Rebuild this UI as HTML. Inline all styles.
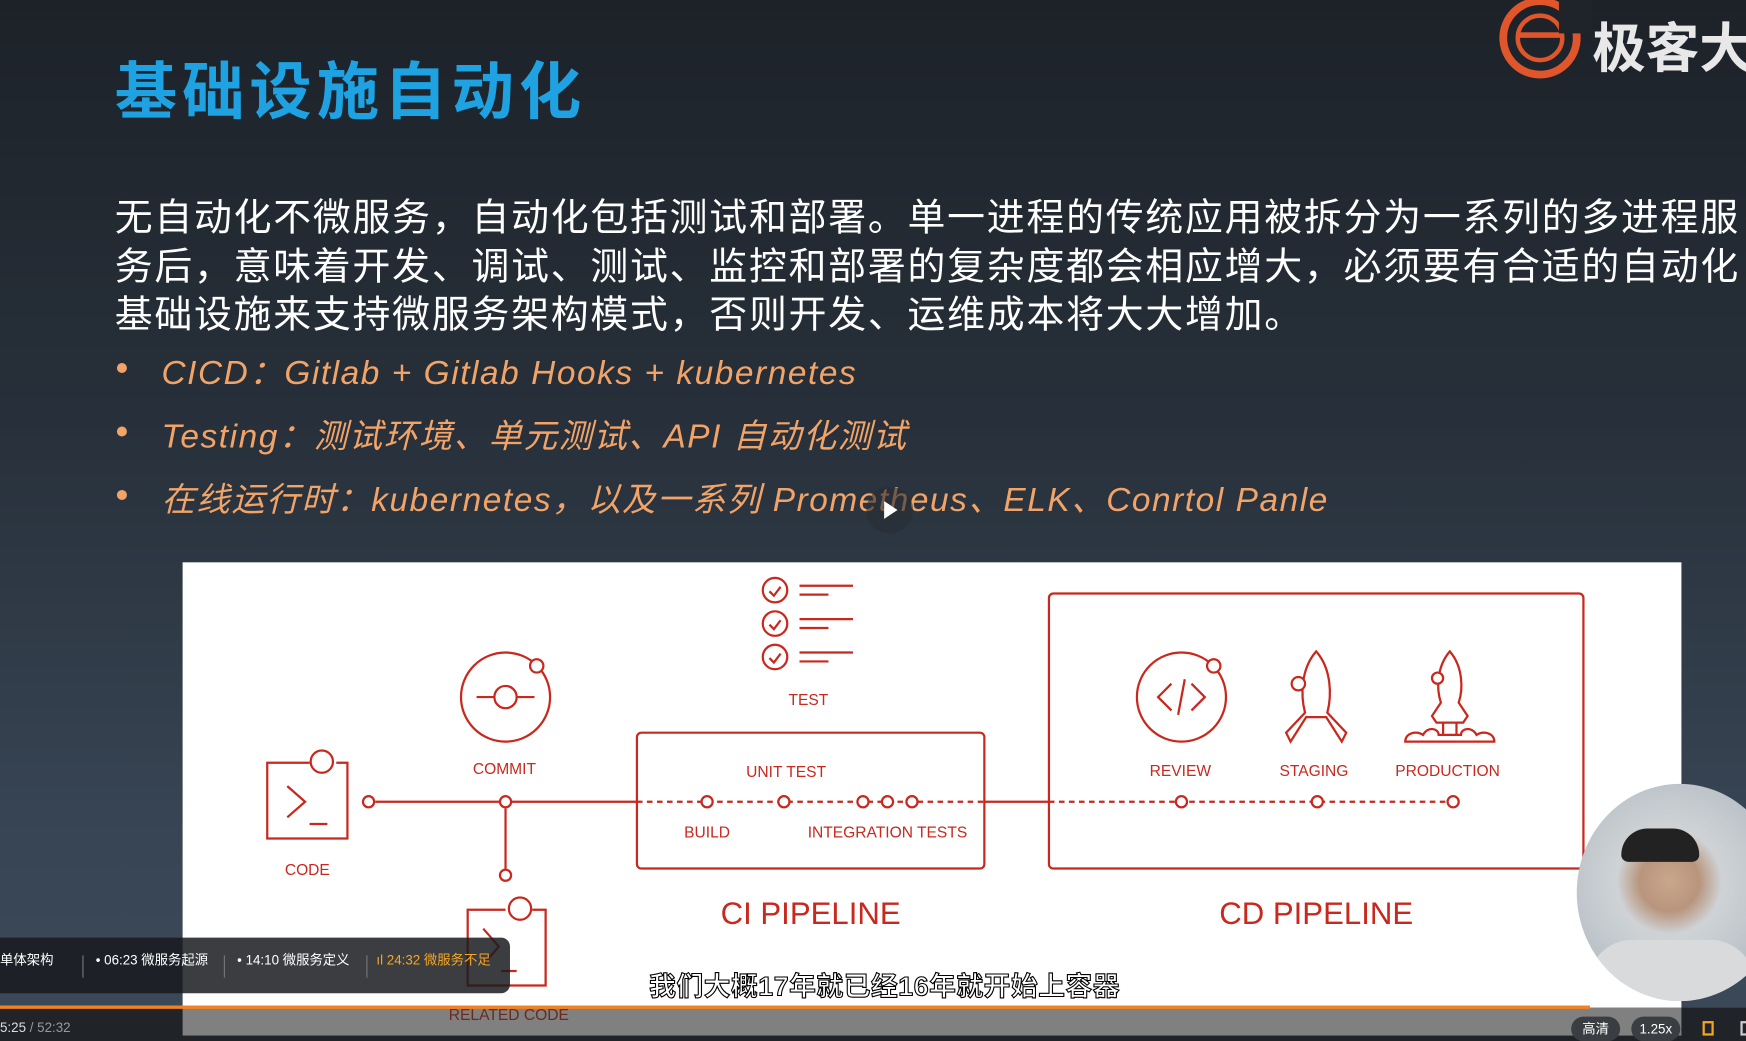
<!DOCTYPE html>
<html><head><meta charset="utf-8"><style>
html,body{margin:0;padding:0;width:1746px;height:1041px;overflow:hidden;background:#1f2429}
#w{position:absolute;left:0;top:0;width:1568px;height:935px;transform:scale(1.11352);transform-origin:0 0;background:linear-gradient(180deg,#1d2229 0%,#27303a 40%,#384554 80%,#3c4958 100%);overflow:hidden;font-family:"Liberation Sans","Noto Sans CJK SC",sans-serif}
.t{position:absolute;white-space:nowrap}
#title{left:103px;top:38px;font-size:56px;font-weight:bold;color:#1ea2e2;letter-spacing:4.5px}
.p{left:103px;font-size:34px;color:#fff;letter-spacing:1.6px}
.b{font-size:30px;color:#f2a468;font-style:italic;letter-spacing:1.4px}
.dot{position:absolute;width:9px;height:9px;border-radius:50%;background:#f2a468}
#panel{position:absolute;left:164px;top:505px;width:1346px;height:430px;background:#fff}
#bar{position:absolute;left:0;top:905px;width:1568px;height:30px;background:#202327}
</style></head><body><div id="w">
<div class="t" id="title">基础设施自动化</div>
<svg style="position:absolute;left:1340px;top:0" width="90" height="75" viewBox="0 0 90 75"><circle cx="43" cy="34" r="33" fill="none" stroke="#e0552a" stroke-width="7"/><circle cx="43" cy="34" r="20" fill="none" stroke="#e0552a" stroke-width="4"/><rect x="24" y="29" width="40" height="5" fill="#e0552a"/><rect x="60" y="0" width="30" height="30" fill="#1f242b"/></svg>
<div class="t" style="left:1430px;top:4px;font-size:48px;font-weight:bold;color:#e8e8e8">极客大</div>
<div class="t p" style="top:168px">无自动化不微服务，自动化包括测试和部署。单一进程的传统应用被拆分为一系列的多进程服</div>
<div class="t p" style="top:212px">务后，意味着开发、调试、测试、监控和部署的复杂度都会相应增大，必须要有合适的自动化</div>
<div class="t p" style="top:255px">基础设施来支持微服务架构模式，否则开发、运维成本将大大增加。</div>
<div class="dot" style="left:105px;top:326px"></div><div class="t b" style="left:145px;top:310px">CICD：Gitlab + Gitlab Hooks + kubernetes</div>
<div class="dot" style="left:105px;top:383px"></div><div class="t b" style="left:145px;top:367px">Testing：测试环境、单元测试、API 自动化测试</div>
<div class="dot" style="left:105px;top:440px"></div><div class="t b" style="left:145px;top:424px">在线运行时：kubernetes，以及一系列 Prometheus、ELK、Conrtol Panle</div>
<div id="panel"></div>
<svg style="position:absolute;left:0;top:0" width="1568" height="935" fill="none" stroke="#c8281e" stroke-width="2" font-family="Liberation Sans,sans-serif">
<rect x="572" y="658" width="312" height="122" rx="4"/>
<rect x="942" y="533" width="480" height="247" rx="4"/>
<line x1="337" y1="720" x2="572" y2="720"/><line x1="884" y1="720" x2="942" y2="720"/>
<line x1="572" y1="720" x2="884" y2="720" stroke-dasharray="5 4"/><line x1="942" y1="720" x2="1300" y2="720" stroke-dasharray="5 4"/>
<line x1="454" y1="726" x2="454" y2="780"/>
<g fill="#fff"><circle cx="331" cy="720" r="5"/><circle cx="454" cy="720" r="5"/><circle cx="454" cy="786" r="5"/><circle cx="635" cy="720" r="5"/><circle cx="704" cy="720" r="5"/><circle cx="775" cy="720" r="5"/><circle cx="797" cy="720" r="5"/><circle cx="819" cy="720" r="5"/><circle cx="1061" cy="720" r="5"/><circle cx="1183" cy="720" r="5"/><circle cx="1305" cy="720" r="5"/></g>
<path d="M278 685h-38v68h72v-68h-10M258 706l16 14-16 14M278 740h16"/><circle cx="289" cy="684" r="10"/>
<circle cx="454" cy="626" r="40"/><circle cx="482" cy="598" r="6" fill="#fff"/><circle cx="454" cy="626" r="10"/><path d="M428 626h16M464 626h16"/>
<g><circle cx="696" cy="530" r="11"/><circle cx="696" cy="560" r="11"/><circle cx="696" cy="590" r="11"/><path d="M691 531l4 4 6-8M691 561l4 4 6-8M691 591l4 4 6-8M718 526h48M718 534h26M718 556h48M718 564h26M718 586h48M718 594h26"/></g>
<circle cx="1061" cy="626" r="40"/><circle cx="1090" cy="598" r="6" fill="#fff"/><path d="M1052 614l-12 12 12 12M1070 614l12 12-12 12M1064 610l-6 32"/>
<path d="M1182 585c-14 16-14 40-10 55l-17 18 4 8 14-22h18l14 22 4-8-17-18c4-15 4-39-10-55z"/><circle cx="1166" cy="614" r="6" fill="#fff"/>
<path d="M1302 585c-12 14-12 34-8 46l-8 12 4 6h24l4-6-8-12c4-12 4-32-8-46zM1296 650v10M1308 650v10M1262 666c0-8 10-10 16-6 4-8 14-6 14 0h20c0-6 10-8 14 0 6-4 16-2 16 6z"/><circle cx="1291" cy="609" r="5" fill="#fff"/>
<g fill="#c8281e" stroke="none" font-size="14" text-anchor="middle"><text x="276" y="786">CODE</text><text x="453" y="695">COMMIT</text><text x="726" y="633">TEST</text><text x="706" y="698">UNIT TEST</text><text x="635" y="752">BUILD</text><text x="797" y="752">INTEGRATION TESTS</text><text x="1060" y="697">REVIEW</text><text x="1180" y="697">STAGING</text><text x="1300" y="697">PRODUCTION</text><text x="728" y="830" font-size="28">CI PIPELINE</text><text x="1182" y="830" font-size="28">CD PIPELINE</text></g>
<path d="M454 817h-34v68h70v-68h-12M434 834l14 16-14 16M450 872h14"/><circle cx="467" cy="816" r="10"/>
</svg>
<div id="bar"></div>
<div style="position:absolute;left:164px;top:905px;width:1346px;height:25px;background:#808080"></div>
<div class="t" style="left:403px;top:903px;font-size:14px;color:#6a2a22">RELATED CODE</div>
<div style="position:absolute;left:0;top:903px;width:1428px;height:3px;background:#f58220"></div>
<div style="position:absolute;left:0;top:842px;width:458px;height:50px;background:rgba(25,27,30,0.85);border-radius:0 8px 8px 0"></div>
<div class="t" style="left:0;top:853px;font-size:12px;color:#fff">单体架构</div>
<div style="position:absolute;left:74px;top:858px;width:1px;height:20px;background:#777"></div>
<div class="t" style="left:86px;top:853px;font-size:12px;color:#fff">• 06:23 微服务起源</div>
<div style="position:absolute;left:201px;top:858px;width:1px;height:20px;background:#777"></div>
<div class="t" style="left:213px;top:853px;font-size:12px;color:#fff">• 14:10 微服务定义</div>
<div style="position:absolute;left:329px;top:858px;width:1px;height:20px;background:#777"></div>
<div class="t" style="left:338px;top:853px;font-size:12px;color:#f5a623">ıl 24:32 微服务不足</div>
<div class="t" style="left:583px;top:866px;font-size:24px;color:#fff;-webkit-text-stroke:1px #000;font-weight:bold;letter-spacing:0.5px">我们大概17年就已经16年就开始上容器</div>
<div class="t" style="left:0;top:916px;font-size:12px;color:#ddd">5:25 <span style="color:#999">/ 52:32</span></div>
<div class="t" style="left:1411px;top:913px;width:44px;height:22px;border-radius:11px;background:#3a3d42;color:#fff;font-size:12px;text-align:center;line-height:22px">高清</div>
<div class="t" style="left:1465px;top:913px;width:44px;height:22px;border-radius:11px;background:#3a3d42;color:#fff;font-size:12px;text-align:center;line-height:22px">1.25x</div>
<div style="position:absolute;left:1529px;top:917px;width:10px;height:13px;border:2px solid #f5a623;box-sizing:border-box"></div>
<div style="position:absolute;left:1563px;top:917px;width:8px;height:13px;border:2px solid #ccc;box-sizing:border-box"></div>
<div style="position:absolute;left:1416px;top:704px;width:185px;height:195px;border-radius:50%;background:radial-gradient(circle at 45% 45%,#c9a78d 0,#b8957c 18%,#cfd3d6 32%,#b7bfc5 70%);overflow:hidden"><div style="position:absolute;left:40px;top:40px;width:70px;height:30px;background:#222;border-radius:30px 30px 8px 8px"></div><div style="position:absolute;left:10px;top:140px;width:150px;height:60px;background:#d8dadc;border-radius:40px 40px 0 0"></div></div>
<div style="position:absolute;left:778px;top:437px;width:42px;height:42px;border-radius:50%;background:rgba(40,45,52,0.6)"></div>
<div style="position:absolute;left:794px;top:450px;width:0;height:0;border-left:12px solid #fff;border-top:8px solid transparent;border-bottom:8px solid transparent"></div>
</div></body></html>
